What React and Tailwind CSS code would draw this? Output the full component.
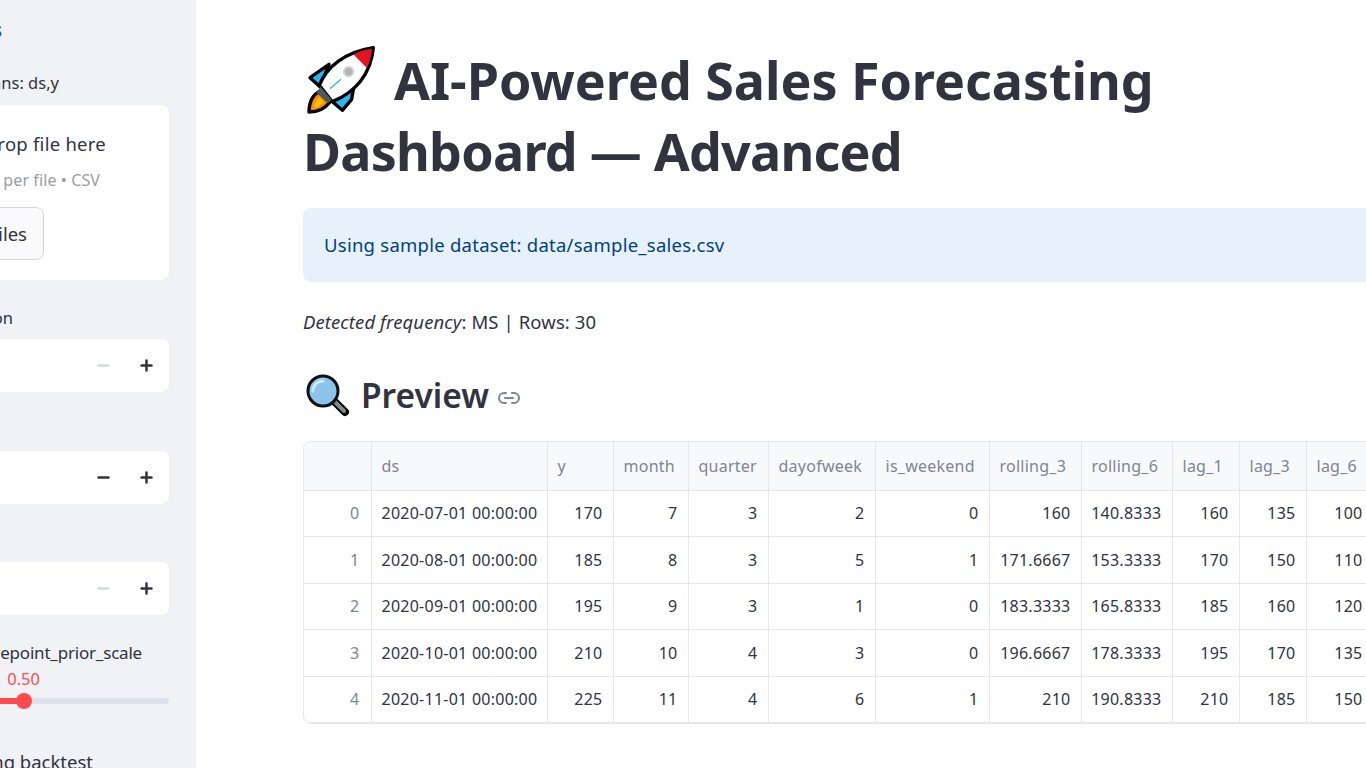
import { Plus, Minus, Link2 } from 'lucide-react';

const COLUMNS = [
  { name: 'ds', width: 176 },
  { name: 'y', width: 66 },
  { name: 'month', width: 75 },
  { name: 'quarter', width: 80 },
  { name: 'dayofweek', width: 107 },
  { name: 'is_weekend', width: 114 },
  { name: 'rolling_3', width: 92 },
  { name: 'rolling_6', width: 91 },
  { name: 'lag_1', width: 67 },
  { name: 'lag_3', width: 67 },
  { name: 'lag_6', width: 67 },
];

const ROWS = [
  ['2020-07-01 00:00:00', 170, 7, 3, 2, 0, '160', '140.8333', 160, 135, 100],
  ['2020-08-01 00:00:00', 185, 8, 3, 5, 1, '171.6667', '153.3333', 170, 150, 110],
  ['2020-09-01 00:00:00', 195, 9, 3, 1, 0, '183.3333', '165.8333', 185, 160, 120],
  ['2020-10-01 00:00:00', 210, 10, 4, 3, 0, '196.6667', '178.3333', 195, 170, 135],
  ['2020-11-01 00:00:00', 225, 11, 4, 6, 1, '210', '190.8333', 210, 185, 150],
];

function RocketIcon() {
  return (
    <svg width="72" height="68" viewBox="50 50 216 204" className="shrink-0">
      <g stroke="#000" strokeWidth="10" strokeLinejoin="round">
        <path d="M65 145 L122 105 L95 172 Z" fill="#29b6f6" />
        <path d="M197 168 L190 210 L162 243 L130 215 Z" fill="#29b6f6" />
        <path d="M62 248 C62 215 75 195 95 185 L125 218 C110 238 90 248 62 248 Z" fill="#ff8f00" />
        <path d="M93 168 C115 112 170 68 255 55 C248 135 200 190 132 217 Z" fill="#fff" />
      </g>
      <path d="M76 238 C78 222 84 212 94 204 L106 218 C98 228 88 234 76 238 Z" fill="#ffc107" />
      <path d="M195 75 C215 65 235 60 251 59 C249 78 245 97 235 115 Z" fill="#e81123" />
      <path d="M97 172 L130 211 L118 222 L84 190 Z" fill="#4f5759" />
      <circle cx="181" cy="127" r="15" fill="#b5b5b5" stroke="#dcdcdc" strokeWidth="5" />
      <path d="M125 178 L158 150" stroke="#29b6f6" strokeWidth="4" />
    </svg>
  );
}

function SearchEmoji() {
  return (
    <svg width="44" height="43" viewBox="0 0 44 43" className="shrink-0">
      <path d="M27 26 L39 38" stroke="#000" strokeWidth="8" strokeLinecap="round" />
      <path d="M28 27 L38 37" stroke="#7d8b8f" strokeWidth="4" strokeLinecap="round" />
      <circle cx="17" cy="17" r="15" fill="#8cc4ee" stroke="#111" strokeWidth="3" />
      <path d="M7 17 A10 10 0 0 1 17 7" stroke="#cfe8fa" strokeWidth="3" fill="none" strokeLinecap="round" />
    </svg>
  );
}

function NumberInput({ minusOff }) {
  return (
    <div className="mt-[9px] flex h-[53px] items-center justify-end rounded-lg bg-white pr-[14px]">
      <Minus size={17} strokeWidth={3.5} className={minusOff ? 'text-[#d5dae5]' : 'text-[#31333f]'} />
      <Plus size={17} strokeWidth={3.5} className="ml-[26px] text-[#31333f]" />
    </div>
  );
}

export default function App() {
  return (
    <div className="flex h-screen w-screen overflow-hidden bg-white text-[#31333f] font-['Noto_Sans',sans-serif]">
      <aside className="h-full w-[196px] shrink-0 overflow-hidden bg-[#f0f2f6]">
        <div className="ml-[-140px] w-[309px]">
          <h2 className="mt-[15px] h-[30px] pr-[167px] text-right text-[20px] font-semibold leading-[30px] text-[#0f5b94]">Settings</h2>
          <p className="mt-[26px] flex h-[24px] justify-end whitespace-nowrap pr-[110px] text-[16.5px] leading-[24px]">Upload CSV with columns: ds,y</p>
          <div className="mt-[10px] h-[175px] rounded-lg bg-white pt-[25px]">
            <p className="whitespace-nowrap pr-[63px] text-right text-[18.5px] tracking-[0.25px] leading-[28px]">Drag and drop file here</p>
            <p className="mt-[11px] whitespace-nowrap pr-[69px] text-right text-[16px] tracking-[0.1px] leading-[22px] text-[#9a9da6]">Limit 200MB per file • CSV</p>
            <div className="mt-[16px] flex justify-end pr-[125px]">
              <button type="button" className="flex h-[53px] w-[120px] items-center justify-end whitespace-nowrap rounded-lg border border-[#d5d6da] bg-[#fafafc] pr-[16px] text-[18.5px]">Browse files</button>
            </div>
          </div>
          <p className="mt-[26px] flex h-[24px] justify-end whitespace-nowrap pr-[156px] text-[16.5px] leading-[24px]">Forecast horizon</p>
          <NumberInput minusOff />
          <div className="h-[50px]" />
          <NumberInput />
          <div className="h-[49px]" />
          <NumberInput minusOff />
          <p className="mt-[26px] flex h-[25px] justify-end whitespace-nowrap pr-[27px] text-[17px] tracking-[-0.2px] leading-[24px]">changepoint_prior_scale</p>
          <p className="h-[26px] pr-[129px] text-right text-[16.5px] leading-[26px] text-[#ff4b4b]">0.50</p>
          <div className="relative mt-[6px] h-[6px] rounded-full bg-[#dce1ea]">
            <div className="h-full w-[164px] rounded-full bg-[#ff4b4b]" />
            <div className="absolute left-[156px] top-[-5px] h-[16px] w-[16px] rounded-full bg-[#ff4b4b]" />
          </div>
          <p className="mt-[46px] flex h-[24px] justify-end whitespace-nowrap pr-[76px] text-[18.5px] leading-[24px]">Run rolling backtest</p>
        </div>
      </aside>

      <main className="min-w-0 flex-1 pl-[107px]">
        <h1 className="mt-[44px] w-[900px] whitespace-nowrap text-[52px] font-bold leading-[71px] tracking-[-0.75px]">
          <span className="ml-[2px] inline-block align-[-14px]"><RocketIcon /></span>
          <span className="ml-[17px] tracking-[-0.05px]">AI-Powered Sales Forecasting</span>
          <br />
          Dashboard — Advanced
        </h1>

        <div className="mt-[22px] flex h-[74px] w-[1200px] items-center rounded-lg bg-[#e7f1fb] pl-[21px] text-[18.5px] tracking-[0.25px] text-[#004280]">
          Using sample dataset: data/sample_sales.csv
        </div>

        <p className="mt-[26px] h-[28px] text-[18.5px] leading-[28px] tracking-[0.1px]">
          <em>Detected frequency</em>: MS | Rows: 30
        </p>

        <div className="mt-[34px] flex h-[50px] items-center">
          <div className="ml-[3px]"><SearchEmoji /></div>
          <h2 className="ml-[11px] text-[33.5px] font-semibold">Preview</h2>
          <Link2 size={24} strokeWidth={2} className="ml-[8px] mt-[5px] text-[#808495]" />
        </div>

        <div className="mt-[21px] w-[1200px] overflow-hidden rounded-lg border border-[#e6e7ea]">
          <table className="w-[1069px] table-fixed border-collapse text-[16px] tracking-[0.25px]">
            <colgroup>
              <col className="w-[67px]" />
              {COLUMNS.map((c) => (
                <col key={c.name} style={{ width: c.width }} />
              ))}
            </colgroup>
            <thead>
              <tr className="h-[48px] bg-[#f8f9fb] text-[#808495]">
                <th className="border-b border-r border-[#e6e7ea]" />
                {COLUMNS.map((c) => (
                  <th key={c.name} className="border-b border-r border-[#e6e7ea] pl-[10px] text-left font-normal">{c.name}</th>
                ))}
              </tr>
            </thead>
            <tbody>
              {ROWS.map((row, i) => (
                <tr key={i} className="h-[46.5px]">
                  <td className="border-b border-r border-[#e6e7ea] pr-[11px] text-right text-[#808495]">{i}</td>
                  {row.map((v, j) => (
                    <td key={j} className={`border-b border-r border-[#e6e7ea] ${j === 0 ? 'pl-[10px] text-left' : 'pr-[10px] text-right'}`}>{v}</td>
                  ))}
                </tr>
              ))}
            </tbody>
          </table>
        </div>
      </main>
    </div>
  );
}
